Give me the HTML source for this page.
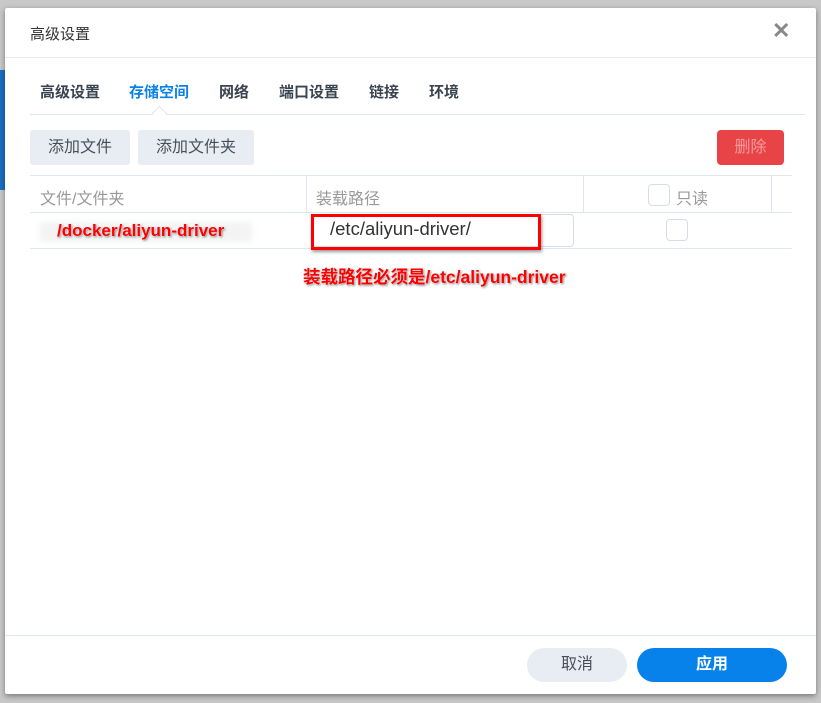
<!DOCTYPE html><html><head><meta charset="utf-8"><style>
body{margin:0;width:821px;height:703px;background:#c8c8c8;position:relative;overflow:hidden;font-family:"Liberation Sans","Noto Sans CJK SC",sans-serif}
.a{position:absolute}
.dlg{left:5px;top:8px;width:811px;height:686px;background:#fff;box-shadow:0 2px 6px rgba(0,0,0,.4);border-radius:2px}
.tab{top:81px;font-size:15px;font-weight:bold;color:#3a4350}
.btn{background:#e8edf3;border-radius:3px;font-size:16px;color:#454f5b;text-align:center}
.hl{height:1px;background:#e0e6ee}
.vl{width:1px;background:#e0e6ee}
.cb{width:20px;height:20px;border:1px solid #d6dde6;border-radius:4px;background:#fff}
</style></head><body>
<div class="a" style="left:0;top:70px;width:5px;height:120px;background:#1a6fc4"></div>
<div class="a dlg"></div>
<div class="a" style="left:30px;top:23px;font-size:15px;color:#333">高级设置</div>
<div class="a" style="left:772px;top:18px;font-size:22px;color:#888;font-weight:bold">✕</div>
<div class="a hl" style="left:5px;top:57px;width:811px;background:#e6eaef"></div>
<div class="a tab" style="left:40px">高级设置</div>
<div class="a tab" style="left:129px;color:#0a83e8">存储空间</div>
<div class="a tab" style="left:219px">网络</div>
<div class="a tab" style="left:279px">端口设置</div>
<div class="a tab" style="left:369px">链接</div>
<div class="a tab" style="left:429px">环境</div>
<div class="a hl" style="left:30px;top:114px;width:775px;background:#dfe5ec"></div>
<div class="a" style="left:154px;top:108px;width:10px;height:10px;background:#fff;border-left:1px solid #dfe5ec;border-top:1px solid #dfe5ec;transform:rotate(45deg)"></div>
<div class="a btn" style="left:30px;top:130px;width:100px;height:35px;line-height:35px">添加文件</div>
<div class="a btn" style="left:138px;top:130px;width:116px;height:35px;line-height:35px">添加文件夹</div>
<div class="a" style="left:717px;top:130px;width:67px;height:35px;line-height:35px;background:#e84447;border-radius:4px;color:#f59a9b;text-align:center;font-size:16px">删除</div>
<div class="a hl" style="left:30px;top:175px;width:762px"></div>
<div class="a hl" style="left:30px;top:212px;width:762px"></div>
<div class="a hl" style="left:30px;top:248px;width:762px"></div>
<div class="a vl" style="left:306px;top:176px;height:36px"></div>
<div class="a vl" style="left:583px;top:176px;height:36px"></div>
<div class="a vl" style="left:771px;top:176px;height:36px"></div>
<div class="a" style="left:40px;top:185px;font-size:16px;color:#999">文件/文件夹</div>
<div class="a" style="left:316px;top:185px;font-size:16px;color:#999">装载路径</div>
<div class="a cb" style="left:648px;top:184px"></div>
<div class="a" style="left:676px;top:185px;font-size:16px;color:#999">只读</div>
<div class="a" style="left:40px;top:222px;width:212px;height:20px;background:#f3f3f3;filter:blur(3px)"></div>
<div class="a" style="left:57px;top:221px;font-size:17px;font-weight:bold;color:#f00;text-shadow:0 0 2px #fff,1px 1px 2px #666">/docker/aliyun-driver</div>
<div class="a" style="left:312px;top:214px;width:260px;height:31px;border:1px solid #d6dde6;border-radius:4px"></div>
<div class="a" style="left:330px;top:218px;font-size:18.5px;color:#333">/etc/aliyun-driver/</div>
<div class="a" style="left:311px;top:214px;width:224px;height:30px;border:3px solid #f00;box-shadow:1px 2px 3px rgba(0,0,0,.4)"></div>
<div class="a cb" style="left:666px;top:219px"></div>
<div class="a" style="left:303px;top:264px;font-size:17.5px;font-weight:bold;color:#f00;text-shadow:0 0 2px #fff,1px 1px 2px #666">装载路径必须是/etc/aliyun-driver</div>
<div class="a hl" style="left:5px;top:635px;width:811px"></div>
<div class="a" style="left:527px;top:648px;width:100px;height:34px;line-height:34px;border-radius:17px;background:#e8edf3;text-align:center;font-size:16px;color:#454f5b">取消</div>
<div class="a" style="left:637px;top:648px;width:150px;height:34px;line-height:34px;border-radius:17px;background:#0782ea;text-align:center;font-size:16px;color:#fff;font-weight:bold">应用</div>
</body></html>
